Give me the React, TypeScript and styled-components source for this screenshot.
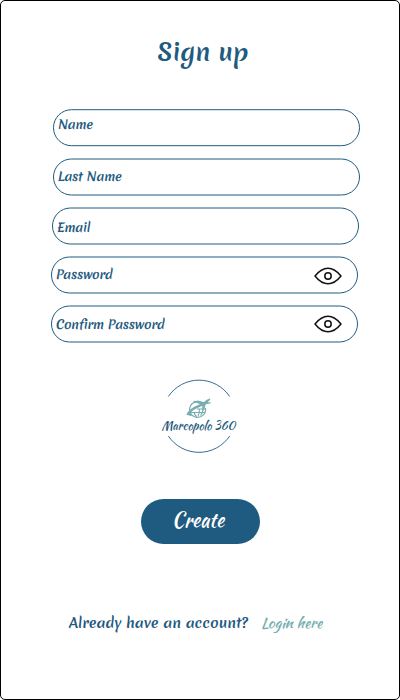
import React from "react";
import styled, { createGlobalStyle } from "styled-components";

const blue = "#1f5b80";
const teal = "#78aeb0";

const GlobalStyle = createGlobalStyle`
  * { box-sizing: border-box; }
  body { margin: 0; background: #fff; }
`;

const Screen = styled.main`
  width: 400px;
  height: 700px;
  border: 1px solid #000;
  border-radius: 5px;
  background: #fff;
  color: ${blue};
  font-family: Merienda, Lato, sans-serif;
  display: flex;
  flex-direction: column;
  align-items: center;
  overflow: hidden;
`;

const Title = styled.h1`
  margin: 33px 0 0 6px;
  height: 36px;
  font-size: 24.2px;
  line-height: 36px;
  font-weight: 700;
  white-space: nowrap;
`;

const Form = styled.form`
  width: 310px;
  margin: 39px 0 0 14px;
  display: flex;
  flex-direction: column;
  gap: 12px;
`;

const Field = styled.label<{ $indent: number; $half?: boolean }>`
  position: relative;
  width: 307px;
  height: 37px;
  margin-left: ${(p) => p.$indent}px;
  padding: 0 16px 0 5px;
  display: flex;
  align-items: flex-start;
  justify-content: space-between;

  &::before {
    content: "";
    position: absolute;
    inset: 0;
    border: 1px solid ${blue};
    border-radius: 19px;
    transform: translateY(${(p) => (p.$half ? 0.5 : 0.2)}px);
  }
`;

const FieldName = styled.span<{ $top: number }>`
  margin-top: ${(p) => p.$top}px;
  font-size: 12.3px;
  line-height: 18px;
  font-weight: 680;
  letter-spacing: -0.17px;
  white-space: nowrap;
  transform: skewX(-4deg);
`;

const EyeIcon = styled.svg<{ $top: number }>`
  width: 28px;
  height: 18px;
  margin-top: ${(p) => p.$top}px;
  fill: none;
  stroke: #111;
  stroke-width: 1.5;
  stroke-linejoin: round;
`;

const Logo = styled.svg`
  width: 80px;
  height: 76px;
  margin: 36px 0 0 0;
  flex: none;
`;

const CreateButton = styled.button`
  width: 119px;
  height: 45px;
  margin: 45px 0 0 1px;
  padding: 0 5px 3px 0;
  flex: none;
  border: 0;
  border-radius: 23px;
  background: ${blue};
  color: #fff;
  font: 400 20px/30px "Kaushan Script", Lato, sans-serif;
`;

const Footer = styled.footer`
  width: 262px;
  height: 24px;
  margin: 67px 0 0 6px;
  display: flex;
  justify-content: space-between;
  line-height: 24px;
  white-space: nowrap;
`;

const Question = styled.span`
  margin-left: -3px;
  font-size: 14.1px;
  font-weight: 680;
`;

const LoginLink = styled.a`
  width: 73px;
  color: ${teal};
  font: 400 15px/24px "Kaushan Script", Lato, sans-serif;
`;

const fields = [
  { name: "Name", indent: 1, top: 6 },
  { name: "Last Name", indent: 1, top: 9, half: true },
  { name: "Email", indent: 0, top: 11, half: true },
  { name: "Password", indent: -1, top: 9, half: true, eye: 10.5 },
  { name: "Confirm Password", indent: -1, top: 10, half: true, eye: 9.5 },
];

const Eye = ({ top }: { top: number }) => (
  <EyeIcon viewBox="0 0 28 18" $top={top}>
    <path d="M1 9C5 4 9.2 1.200 14 1.200S23 4 27 9c-4 5-8.200 7.800-13 7.800S5 14 1 9Z" />
    <circle cx="14" cy="9" r="3.200" />
  </EyeIcon>
);

const MarcopoloLogo = () => (
  <Logo viewBox="160 378 80 76">
    <g fill="none" stroke={blue} strokeWidth="0.9">
      <path d="M168.300 396.500A37 37 0 0 1 229.700 396.500" />
      <path d="M168.300 436A37 37 0 0 0 229.700 436" />
    </g>
    <g fill="none" stroke={teal} strokeWidth="1.1">
      <path d="M203 403.500a8 8 0 1 0 2.500 4.500M202 402.500a8 8 0 0 0-10.500 2" />
      <path d="M199.500 408.500c0 3-.5 6-1.500 8M194 412c.5 2 1.500 4 3 4.500M203 407c.3 3-.5 6-2.500 8.500M191 412.500h14M197 409h9" />
    </g>
    <path
      fill={teal}
      d="M186.500 415c1-4 5.500-7.500 11.500-10l2-.9-7-2.300 1.300-1.100 9.700 1.200c2-1.500 3.700-3.200 6-3.500.8.200.3 1.500-2.300 3.900l3.500.1-.9 1-4.600.9-1.700 6-1.200.3-.6-4.900c-4 1.900-8 3.600-10.200 5.500-1.800 1.700-1.600 3.500.4 5-3-.3-3.500-1.600-5.900-1.200Z"
    />
    <text
      x="161.500"
      y="430"
      fill={blue}
      fontFamily='"Kaushan Script", Lato, sans-serif'
      fontSize="12.300"
      textLength="73.500"
      lengthAdjust="spacingAndGlyphs"
    >
      Marcopolo 360
    </text>
  </Logo>
);

export default function App() {
  return (
    <>
      <GlobalStyle />
      <Screen>
        <Title>Sign up</Title>
        <Form>
          {fields.map((f) => (
            <Field key={f.name} $indent={f.indent} $half={f.half}>
              <FieldName $top={f.top}>{f.name}</FieldName>
              {f.eye && <Eye top={f.eye} />}
            </Field>
          ))}
        </Form>
        <MarcopoloLogo />
        <CreateButton type="button">Create</CreateButton>
        <Footer>
          <Question>Already have an account?</Question>
          <LoginLink>Login here</LoginLink>
        </Footer>
      </Screen>
    </>
  );
}
